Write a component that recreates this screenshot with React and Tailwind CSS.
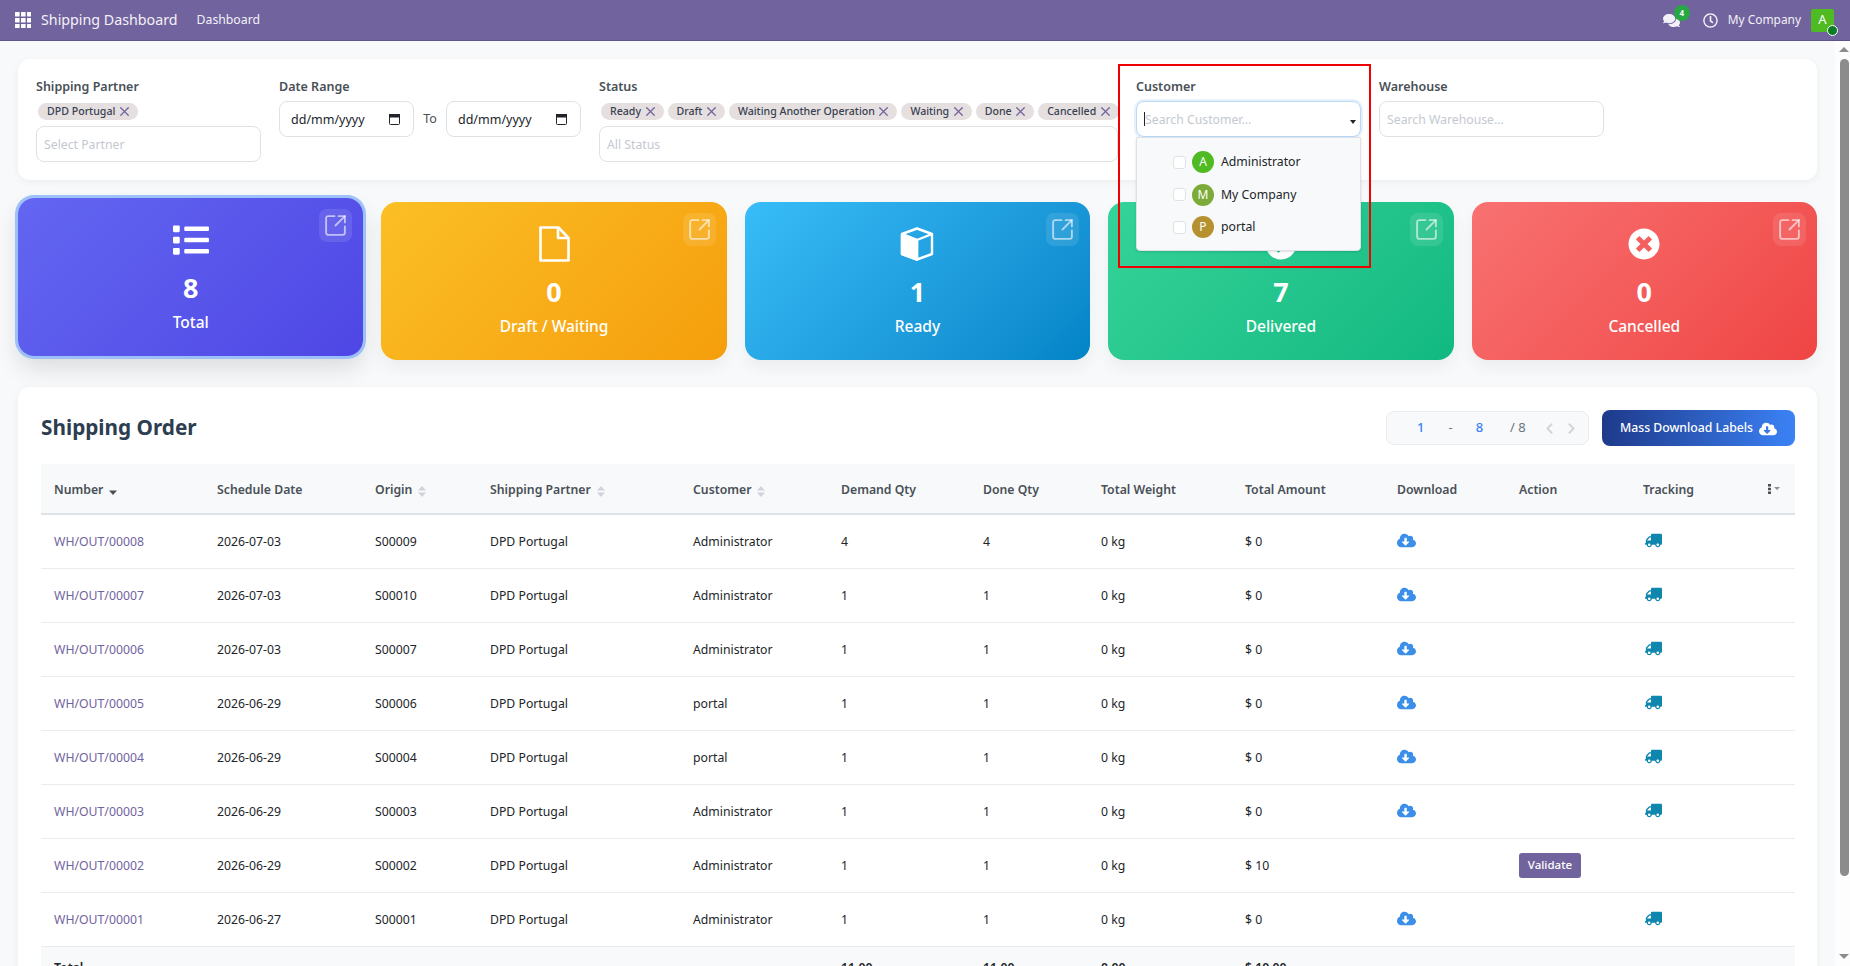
import { FaCheckCircle, FaCloudDownloadAlt, FaComments, FaList, FaRegClock, FaTimesCircle, FaTruck } from 'react-icons/fa'
import { ChevronLeft, ChevronRight, SquareArrowOutUpRight, X } from 'lucide-react'

const statusTags = ['Ready', 'Draft', 'Waiting Another Operation', 'Waiting', 'Done', 'Cancelled']

const customers = [
  { name: 'Administrator', initial: 'A', color: 'bg-[#4fba22]' },
  { name: 'My Company', initial: 'M', color: 'bg-[#7cab3a]' },
  { name: 'portal', initial: 'P', color: 'bg-[#b5912f]' },
]

function FileIcon() {
  return (
    <svg width="31" height="36" viewBox="0 0 31 36" fill="none" stroke="#fff" strokeWidth="2.6" strokeLinejoin="round" aria-hidden="true">
      <path d="M1.5 1.5h18l10 10.5v22.500h-28z" />
      <path d="M19 1.500v10.500h10.500" />
    </svg>
  )
}

function CubeIcon() {
  return (
    <svg width="34" height="34" viewBox="0 0 34 34" fill="none" stroke="#fff" strokeWidth="2.4" strokeLinejoin="round" aria-hidden="true">
      <path d="M17 1.500l15 5.500v20l-15 5.500l-15-5.500v-20z" />
      <path d="M2 7l15 6l15-6M17 13v19.500" />
      <path d="M2 7l15 6v19.500l-15-5.500z" fill="#fff" />
    </svg>
  )
}

const cards = [
  { label: 'Total', value: 8, icon: <FaList size={36} aria-hidden="true" />, gradient: 'from-[#6366f1] to-[#4f46e5]', active: true },
  { label: 'Draft / Waiting', value: 0, icon: <FileIcon />, gradient: 'from-[#fbbf24] to-[#f59e0b]' },
  { label: 'Ready', value: 1, icon: <CubeIcon />, gradient: 'from-[#38bdf8] to-[#0284c7]' },
  { label: 'Delivered', value: 7, icon: <FaCheckCircle size={32} aria-hidden="true" />, gradient: 'from-[#34d399] to-[#10b981]' },
  { label: 'Cancelled', value: 0, icon: <FaTimesCircle size={32} aria-hidden="true" />, gradient: 'from-[#f87171] to-[#ef4444]' },
]

const columns = [
  { label: 'Number', width: 'w-[163px]', sort: 'active' },
  { label: 'Schedule Date', width: 'w-[158px]' },
  { label: 'Origin', width: 'w-[115px]', sort: 'both' },
  { label: 'Shipping Partner', width: 'w-[203px]', sort: 'both' },
  { label: 'Customer', width: 'w-[148px]', sort: 'both' },
  { label: 'Demand Qty', width: 'w-[142px]' },
  { label: 'Done Qty', width: 'w-[118px]' },
  { label: 'Total Weight', width: 'w-[144px]' },
  { label: 'Total Amount', width: 'w-[152px]' },
  { label: 'Download', width: 'w-[122px]' },
  { label: 'Action', width: 'w-[124px]' },
  { label: 'Tracking', width: 'w-[125px]' },
]

const orders = [
  { number: 'WH/OUT/00008', date: '2026-07-03', origin: 'S00009', customer: 'Administrator', demand: 4, done: 4, amount: '$ 0' },
  { number: 'WH/OUT/00007', date: '2026-07-03', origin: 'S00010', customer: 'Administrator', demand: 1, done: 1, amount: '$ 0' },
  { number: 'WH/OUT/00006', date: '2026-07-03', origin: 'S00007', customer: 'Administrator', demand: 1, done: 1, amount: '$ 0' },
  { number: 'WH/OUT/00005', date: '2026-06-29', origin: 'S00006', customer: 'portal', demand: 1, done: 1, amount: '$ 0' },
  { number: 'WH/OUT/00004', date: '2026-06-29', origin: 'S00004', customer: 'portal', demand: 1, done: 1, amount: '$ 0' },
  { number: 'WH/OUT/00003', date: '2026-06-29', origin: 'S00003', customer: 'Administrator', demand: 1, done: 1, amount: '$ 0' },
  { number: 'WH/OUT/00002', date: '2026-06-29', origin: 'S00002', customer: 'Administrator', demand: 1, done: 1, amount: '$ 10', pending: true },
  { number: 'WH/OUT/00001', date: '2026-06-27', origin: 'S00001', customer: 'Administrator', demand: 1, done: 1, amount: '$ 0' },
]

const cell = 'pt-[2px] pl-[13px]'

function AppsIcon() {
  const cells = [0, 6, 12]
  return (
    <svg width="16" height="16" viewBox="0 0 16 16" fill="#fff" aria-hidden="true">
      {cells.map((y) => cells.map((x) => <rect key={`${x}-${y}`} x={x} y={y} width="4.6" height="4.6" rx="0.5" />))}
    </svg>
  )
}

function SortIcon({ active }) {
  if (active) {
    return (
      <svg width="8" height="10" viewBox="0 0 8 10" className="ml-[6px] inline-block" aria-hidden="true">
        <path d="M0 4.500h8L4 9z" fill="#495057" />
      </svg>
    )
  }
  return (
    <svg width="8" height="11" viewBox="0 0 8 11" className="ml-[6px] inline-block" aria-hidden="true">
      <path d="M0 4.500h8L4 0zM0 6.500h8L4 11z" fill="#ced4da" />
    </svg>
  )
}

function Tag({ children }) {
  return (
    <span className="flex h-[17px] items-center gap-[1.5px] rounded-full bg-[#e6dfdf] pr-[6px] pl-[9px] text-[10.6px] font-medium whitespace-nowrap text-[#374151]">
      {children}
      <X size={15} strokeWidth={2} className="text-[#71639e]" aria-hidden="true" />
    </span>
  )
}

function FieldLabel({ children }) {
  return <div className="h-5 text-[12.5px] leading-5 font-semibold text-[#495057]">{children}</div>
}

function DateField() {
  return (
    <div className="flex h-9 w-[135px] items-center justify-between rounded-lg border border-[#dee2e6] bg-white px-[11px] pr-[13px] text-[12.5px] text-[#212529]">
      <span className="pt-[2px]">dd/mm/yyyy</span>
      <svg width="11" height="12" viewBox="0 0 11 12" fill="none" stroke="#212529" aria-hidden="true">
        <rect x="0.5" y="1.500" width="10" height="10" rx="1" />
        <rect x="0.5" y="1.500" width="10" height="2.500" fill="#212529" />
      </svg>
    </div>
  )
}

function TextField({ placeholder, className = '' }) {
  return (
    <input
      type="text"
      readOnly
      placeholder={placeholder}
      className={`h-9 w-full rounded-lg border border-[#dee2e6] bg-white px-[7px] text-[12.25px] outline-none placeholder:text-[#c4c9d0] ${className}`}
    />
  )
}

function CustomerFilter() {
  return (
    <div className="relative w-[225px] shrink-0">
      <FieldLabel>Customer</FieldLabel>
      <div className="relative mt-1 flex h-9 items-center rounded-lg border border-[#b9d9f7] bg-white pl-[7px] shadow-[0_0_0_2px_#e6f1fc]">
        <span className="h-[14px] w-px bg-[#212529]" />
        <span className="pt-[2px] text-[12.25px] text-[#c4c9d0]">Search Customer...</span>
        <svg width="6" height="4" viewBox="0 0 6 4" className="absolute top-[18px] right-[4px]" aria-hidden="true">
          <path d="M0 0h6L3 4z" fill="#212529" />
        </svg>
      </div>
      <ul className="absolute top-[60px] left-0 z-10 h-[114px] w-[225px] rounded-b border border-[#dee2e6] bg-[#f8f9fa] pt-[8px] shadow-sm">
        {customers.map((customer) => (
          <li key={customer.name} className="flex h-[32.5px] items-center pl-[36px] text-[12.25px] text-[#212529]">
            <span className="size-[13px] rounded-[3px] border border-[#dee2e6] bg-white" />
            <span className={`ml-[6px] flex size-[22px] items-center justify-center rounded-full text-[12px] text-white ${customer.color}`}>
              {customer.initial}
            </span>
            <span className="ml-[7px]">{customer.name}</span>
          </li>
        ))}
      </ul>
      {/* annotation drawn on the screenshot */}
      <div className="pointer-events-none absolute top-[-13px] left-[-18px] z-20 h-[204px] w-[253px] border-2 border-[#f00000]" />
    </div>
  )
}

function FilterBar() {
  return (
    <section className="flex gap-[18px] rounded-xl bg-white p-[18px] shadow-[0_2px_8px_rgba(0,0,0,0.05)]">
      <div className="w-[225px] shrink-0">
        <FieldLabel>Shipping Partner</FieldLabel>
        <div className="mt-[6px] flex pl-[2px]">
          <Tag>DPD Portugal</Tag>
        </div>
        <TextField placeholder="Select Partner" className="mt-[6px]" />
      </div>
      <div className="w-[302px] shrink-0">
        <FieldLabel>Date Range</FieldLabel>
        <div className="mt-1 flex items-center justify-between text-[12.5px] text-[#495057]">
          <DateField />
          <span>To</span>
          <DateField />
        </div>
      </div>
      <div className="w-[519px] shrink-0">
        <FieldLabel>Status</FieldLabel>
        <div className="mt-[6px] flex gap-[4px] pl-[2px]">
          {statusTags.map((tag) => (
            <Tag key={tag}>{tag}</Tag>
          ))}
        </div>
        <TextField placeholder="All Status" className="mt-[6px]" />
      </div>
      <CustomerFilter />
      <div className="w-[225px] shrink-0">
        <FieldLabel>Warehouse</FieldLabel>
        <TextField placeholder="Search Warehouse..." className="mt-1" />
      </div>
    </section>
  )
}

function StatCard({ label, value, icon, gradient, active }) {
  return (
    <div
      className={`relative flex h-[158px] flex-col items-center rounded-2xl bg-linear-135 pt-[24px] text-white ${gradient} ${
        active
          ? '-translate-y-[4px] shadow-[0_0_0_3px_rgba(147,187,250,0.9),0_12px_24px_rgba(0,0,0,0.12)]'
          : 'shadow-[0_8px_16px_rgba(0,0,0,0.05)]'
      }`}
    >
      <button type="button" className="absolute top-[11px] right-[11px] flex size-[33px] items-center justify-center rounded-lg bg-white/10">
        <SquareArrowOutUpRight size={25} strokeWidth={1.800} className="text-white/60" aria-hidden="true" />
      </button>
      <div className="flex h-[36px] items-center justify-center">{icon}</div>
      <div className="mt-[12px] text-[27px] leading-[36px] font-bold">{value}</div>
      <div className="mt-[4px] text-[15.5px] leading-6 font-medium">{label}</div>
    </div>
  )
}

function Pager() {
  return (
    <div className="flex h-[34px] w-[203px] items-center rounded-lg border border-[#e9ecef] bg-[#f8f9fa] text-[13px] text-[#6c757d]">
      <span className="ml-[30px] font-medium text-[#3b82f6]">1</span>
      <span className="ml-[24px]">-</span>
      <span className="ml-[23px] font-medium text-[#3b82f6]">8</span>
      <span className="ml-[27px]">/ 8</span>
      <ChevronLeft size={17} strokeWidth={2.500} className="ml-[15px] text-[#ced4da]" aria-hidden="true" />
      <ChevronRight size={17} strokeWidth={2.500} className="ml-[5px] text-[#ced4da]" aria-hidden="true" />
    </div>
  )
}

function OrdersTable() {
  return (
    <section className="mt-[27px] rounded-xl bg-white pt-[23px] pr-[22px] pb-[28px] pl-[23px] shadow-[0_2px_8px_rgba(0,0,0,0.05)]">
      <div className="flex h-9 items-center justify-between">
        <h2 className="text-[20.75px] font-bold text-[#2c3e50]">Shipping Order</h2>
        <div className="flex items-center gap-[13px]">
          <Pager />
          <button
            type="button"
            className="flex h-9 w-[193px] items-center justify-center gap-[6px] rounded-lg bg-linear-to-r from-[#1e3a8a] to-[#3b82f6] pt-px text-[12.25px] font-medium text-white"
          >
            Mass Download Labels
            <FaCloudDownloadAlt size={18} aria-hidden="true" />
          </button>
        </div>
      </div>
      <table className="mt-[18px] w-[1754px] table-fixed text-left text-[12.25px] text-[#212529]">
        <colgroup>
          {columns.map((column) => (
            <col key={column.label} className={column.width} />
          ))}
          <col className="w-[40px]" />
        </colgroup>
        <thead className="bg-[#f8f9fa] text-[#495057]">
          <tr className="h-[50px] border-b-2 border-[#dee2e6]">
            {columns.map((column) => (
              <th key={column.label} className="pt-[4px] pl-[13px] font-semibold whitespace-nowrap">
                {column.label}
                {column.sort && <SortIcon active={column.sort === 'active'} />}
              </th>
            ))}
            <th className="pl-[13px]">
              <svg width="12" height="10" viewBox="0 0 12 10" aria-hidden="true">
                <path d="M0 0h3v2.500H0zM0 3.700h3v2.500H0zM0 7.500h3V10H0z" fill="#495057" />
                <path d="M6 3h6L9 6z" fill="#868e96" />
              </svg>
            </th>
          </tr>
        </thead>
        <tbody>
          {orders.map((order) => (
            <tr key={order.number} className="h-[54px] border-b border-[#e9ecef]">
              <td className={`${cell} text-[#71639e]`}>{order.number}</td>
              <td className={cell}>{order.date}</td>
              <td className={cell}>{order.origin}</td>
              <td className={cell}>DPD Portugal</td>
              <td className={cell}>{order.customer}</td>
              <td className={cell}>{order.demand}</td>
              <td className={cell}>{order.done}</td>
              <td className={cell}>0 kg</td>
              <td className={cell}>{order.amount}</td>
              <td className="pl-[13px]">
                {!order.pending && <FaCloudDownloadAlt size={19} className="mb-[2px] text-[#3b8fe8]" aria-hidden="true" />}
              </td>
              <td className="pl-[13px]">
                {order.pending && (
                  <button type="button" className="h-[25px] w-[62px] rounded-[3px] bg-[#71639e] text-[11.5px] font-medium text-white">
                    Validate
                  </button>
                )}
              </td>
              <td className="pl-[13px]">
                {!order.pending && <FaTruck size={17} className="mb-[2px] ml-[2px] -scale-x-100 text-[#0e86ad]" aria-hidden="true" />}
              </td>
              <td />
            </tr>
          ))}
        </tbody>
        <tfoot className="bg-[#f8f9fa] font-semibold">
          <tr className="h-[44px]">
            <td className="pl-[13px]">Total</td>
            <td />
            <td />
            <td />
            <td />
            <td className="pl-[13px]">11.00</td>
            <td className="pl-[13px]">11.00</td>
            <td className="pl-[13px]">0.00</td>
            <td className="pl-[13px]">$ 10.00</td>
            <td />
            <td />
            <td />
            <td />
          </tr>
        </tfoot>
      </table>
    </section>
  )
}

// headless chromium hides native scrollbars, so the rail is drawn
function ScrollRail() {
  return (
    <div className="flex w-[15px] shrink-0 flex-col items-center bg-[#fdfdfd] pt-[6px] pb-[7px] pl-[3px]">
      <svg width="10" height="5" viewBox="0 0 10 5" aria-hidden="true">
        <path d="M0 5h10L5 0z" fill="#8c8c8c" />
      </svg>
      <div className="mt-[7px] h-[817px] w-[9px] rounded-full bg-[#8c8c8c]" />
      <svg width="10" height="5" viewBox="0 0 10 5" className="mt-auto" aria-hidden="true">
        <path d="M0 0h10L5 5z" fill="#8c8c8c" />
      </svg>
    </div>
  )
}

export default function App() {
  return (
    <div className="flex h-screen flex-col overflow-hidden bg-[#f8f9fa] font-['Noto_Sans',sans-serif]">
      <header className="flex h-[41px] shrink-0 items-center border-b border-[#5f5488] bg-[#71639e] pr-[16px] pl-[15px] text-[#f3f1f8]">
        <AppsIcon />
        <span className="ml-[10px] text-[14.25px]">Shipping Dashboard</span>
        <span className="ml-[19px] text-[12.25px]">Dashboard</span>
        <div className="ml-auto flex items-center">
          <div className="relative">
            <FaComments size={17} aria-hidden="true" />
            <span className="absolute top-[-7px] left-[11px] flex size-[16px] items-center justify-center rounded-full bg-[#28a745] text-[8px] font-bold text-white">
              4
            </span>
          </div>
          <FaRegClock size={15} className="ml-[23px]" aria-hidden="true" />
          <span className="ml-[10px] text-[11.9px]">My Company</span>
          <div className="relative ml-[10px] flex size-[23px] items-center justify-center rounded-[2px] bg-[#4fba22] text-[13px] text-white">
            A
            <span className="absolute right-[-4px] bottom-[-4px] size-[11px] rounded-full border border-white bg-[#0a7d25]" />
          </div>
        </div>
      </header>
      <div className="flex min-h-0 flex-1">
        <main className="min-w-0 flex-1 overflow-hidden px-[18px] pt-[18px]">
          <FilterBar />
          <div className="mt-[22px] grid grid-cols-5 gap-[18px]">
            {cards.map((card) => (
              <StatCard key={card.label} {...card} />
            ))}
          </div>
          <OrdersTable />
        </main>
        <ScrollRail />
      </div>
    </div>
  )
}
